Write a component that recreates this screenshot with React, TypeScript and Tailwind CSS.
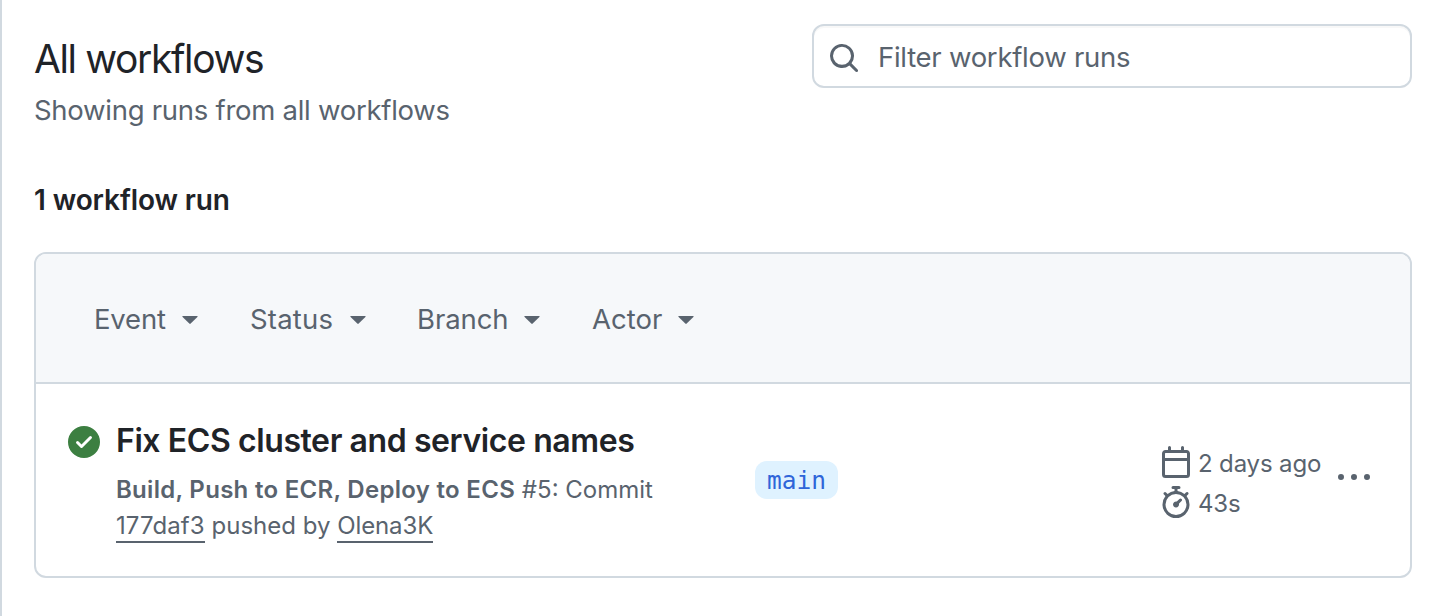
import React from "react";

type IconProps = { path: string; className?: string };

function Icon({ path, className = "" }: IconProps) {
  return (
    <svg viewBox="0 0 16 16" aria-hidden="true" fill="currentColor" className={`size-8 shrink-0 ${className}`}>
      <path fillRule="evenodd" d={path} />
    </svg>
  );
}

const icons = {
  search:
    "M10.68 11.74a6 6 0 0 1-7.922-8.982 6 6 0 0 1 8.982 7.922l3.04 3.04a.749.749 0 0 1-.326 1.275.749.749 0 0 1-.734-.215ZM11.5 7a4.499 4.499 0 1 0-8.997 0A4.499 4.499 0 0 0 11.5 7Z",
  calendar:
    "M4.75 0a.75.75 0 0 1 .75.75V2h5V.75a.75.75 0 0 1 1.5 0V2h1.25c.966 0 1.75.784 1.75 1.75v10.5A1.75 1.75 0 0 1 13.25 16H2.75A1.75 1.75 0 0 1 1 14.25V3.75C1 2.784 1.784 2 2.75 2H4V.75A.75.75 0 0 1 4.75 0ZM2.5 7.5v6.75c0 .138.112.25.25.25h10.5a.25.25 0 0 0 .25-.25V7.5Zm10.75-4H2.75a.25.25 0 0 0-.25.25V6h11V3.75a.25.25 0 0 0-.25-.25Z",
  stopwatch:
    "M5.75.75A.75.75 0 0 1 6.5 0h3a.75.75 0 0 1 0 1.5h-.75v1l-.001.041a6.724 6.724 0 0 1 3.464 1.435l.007-.006.75-.75a.749.749 0 0 1 1.275.326.749.749 0 0 1-.215.734l-.75.75-.006.007a6.75 6.75 0 1 1-10.548 0L2.72 5.03l-.75-.75a.751.751 0 0 1 .018-1.042.751.751 0 0 1 1.042-.018l.75.75.007.006A6.72 6.72 0 0 1 7.25 2.541V1.5H6.5a.75.75 0 0 1-.75-.75ZM8 14.5a5.25 5.25 0 1 0-.001-10.501A5.25 5.25 0 0 0 8 14.5Zm.389-6.7 1.33-1.33a.75.75 0 1 1 1.061 1.06L9.45 8.861A1.503 1.503 0 0 1 8 10.75a1.499 1.499 0 1 1 .389-2.95Z",
  check:
    "M8 16A8 8 0 1 1 8 0a8 8 0 0 1 0 16Zm3.78-9.72a.751.751 0 0 0-.018-1.042.751.751 0 0 0-1.042-.018L6.75 9.19 5.28 7.72a.751.751 0 0 0-1.042.018.751.751 0 0 0-.018 1.042l2 2a.75.75 0 0 0 1.06 0Z",
  kebab:
    "M8 9a1.5 1.5 0 1 0 0-3 1.5 1.5 0 0 0 0 3ZM1.5 9a1.5 1.5 0 1 0 0-3 1.5 1.5 0 0 0 0 3Zm13 0a1.5 1.5 0 1 0 0-3 1.5 1.5 0 0 0 0 3Z",
};

const filters = [
  { label: "Event", width: "w-[88px]", gap: "mr-[52px] tracking-[-0.2px]" },
  { label: "Status", width: "w-[100px]", gap: "mr-[51px] tracking-[0.2px]" },
  { label: "Branch", width: "w-[107px]", gap: "mr-[52px] tracking-[-0.1px]" },
  { label: "Actor", width: "w-[86px]", gap: "tracking-[0.05px]" },
];

function Filter({ label, width, gap }: { label: string; width: string; gap: string }) {
  return (
    <button className={`flex items-center text-left ${gap}`}>
      <span className={width}>{label}</span>
      <svg viewBox="0 0 16 8" className="mt-0.5 h-2 w-4" fill="currentColor" aria-hidden="true">
        <path d="M.8 0h14.4q.8.2.2.9L8.7 7.6q-.7.6-1.4 0L.6.9Q0 .2.8 0Z" />
      </svg>
    </button>
  );
}

export default function App() {
  return (
    <main className="h-[616px] w-[1436px] overflow-hidden border-l-2 border-[#d1d9e0] bg-white pl-8 pr-6 pt-6 font-['Inter',sans-serif] text-[#59636e]">
      <header className="flex h-[152px] items-start justify-between">
        <div>
          <h1 className="mt-[11px] text-[39px] leading-[48px] tracking-[-1.38px] text-[#1f2328]">All workflows</h1>
          <p className="mt-[6px] text-[27.5px] leading-[42px] tracking-[-0.27px]">Showing runs from all workflows</p>
        </div>
        <label className="flex h-16 w-[600px] items-center rounded-xl border-2 border-[#d1d9e0] pl-3.5 shadow-[inset_0_2px_0_rgba(31,35,40,0.03)]">
          <Icon path={icons.search} className="mt-1" />
          <input
            className="ml-[18px] mt-0.5 min-w-0 flex-1 bg-transparent text-[27.5px] leading-10 tracking-[-0.27px] outline-none placeholder:text-[#59636e]"
            placeholder="Filter workflow runs"
          />
        </label>
      </header>

      <h2 className="flex h-[76px] items-start pt-[3px] text-[28px] font-semibold leading-[42px] tracking-[-0.1px] text-[#1f2328]">
        1 workflow run
      </h2>

      <section className="h-[326px] w-[1378px] overflow-hidden rounded-xl border-2 border-[#d1d9e0]">
        <div className="flex h-[130px] items-center border-b-2 border-[#d1d9e0] bg-[#f6f8fa] pl-[58px] pt-0.5 text-[27.5px] leading-[42px]">
          {filters.map((filter) => (
            <Filter key={filter.label} {...filter} />
          ))}
        </div>

        <article className="flex h-[192px] pl-8">
          <Icon path={icons.check} className="mt-[42px] text-[#3c7f41]" />
          <div className="ml-4 w-[639px] pt-9">
            <h3 className="whitespace-nowrap text-[32px] font-semibold leading-[42px] tracking-[-0.41px] text-[#1f2328]">
              Fix ECS cluster and service names
            </h3>
            <p className="mt-2.5 whitespace-nowrap text-[24px] leading-9">
              <b className="font-semibold tracking-[0.3px]">Build, Push to ECR, Deploy to ECS</b> #5: Commit
              <br />
              <a className="inline-block h-[35px] border-b-2 border-[#59636e] tracking-[0.1px]">177daf3</a> pushed by{" "}
              <a className="inline-block h-[35px] border-b-2 border-[#59636e] tracking-[-0.1px]">Olena3K</a>
            </p>
          </div>
          <div className="w-[405px] pt-[77px]">
            <span className="inline-flex h-[38px] items-center rounded-xl bg-[#dff2ff] px-3 pt-0.5 font-['DejaVu_Sans_Mono',monospace] text-[24.5px] text-[#2f65d9]">
              main
            </span>
          </div>
          <div className="w-[178px] pt-[60px] text-[24px] leading-10 tracking-[-0.15px]">
            <div className="flex h-10 items-center">
              <Icon path={icons.calendar} className="-mt-1" />
              <time className="ml-1.5">2 days ago</time>
            </div>
            <div className="flex h-10 items-center">
              <Icon path={icons.stopwatch} className="-mt-1" />
              <span className="ml-1.5">43s</span>
            </div>
          </div>
          <Icon path={icons.kebab} className="mt-[78px]" />
        </article>
      </section>
    </main>
  );
}
